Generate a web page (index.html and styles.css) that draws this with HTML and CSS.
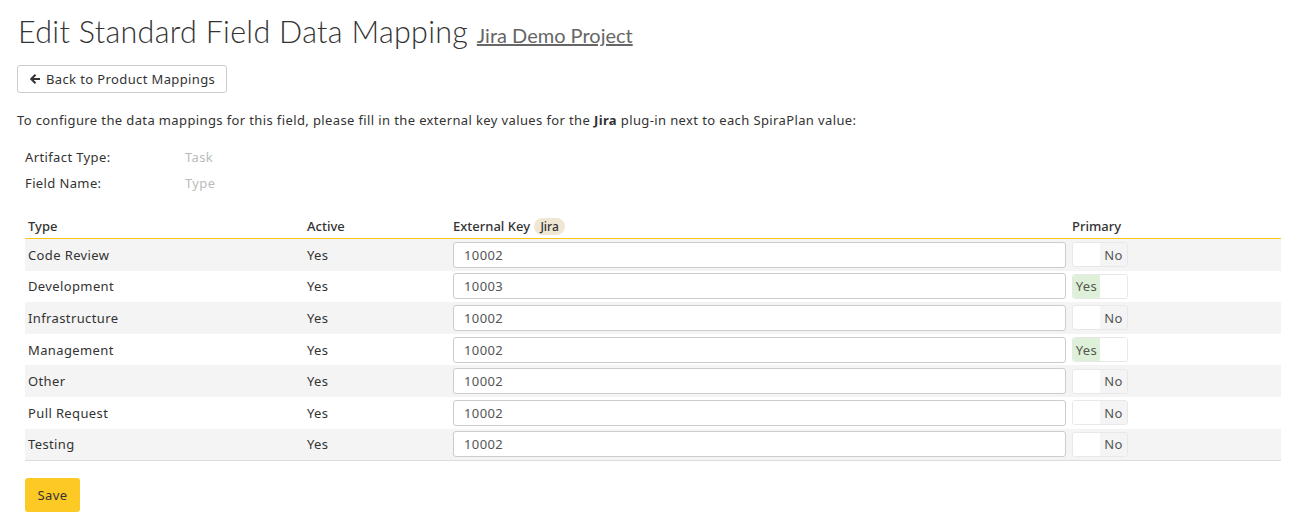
FILE: index.html
```html
<!DOCTYPE html>
<html>
<head>
<meta charset="utf-8">
<link rel="stylesheet" href="styles.css">
</head>
<body>
<div class="page">
  <h1 class="title">Edit Standard Field Data Mapping <a class="proj" href="#">Jira Demo Project</a></h1>
  <button class="btn-back"><svg class="arrow" viewBox="0 0 12 12" width="12" height="12"><path d="M11 6H2.5M6.5 1.8L2.2 6l4.3 4.2" fill="none" stroke="#333" stroke-width="2"/></svg>Back to Product Mappings</button>
  <p class="intro">To configure the data mappings for this field, please fill in the external key values for the <b>Jira</b> plug-in next to each SpiraPlan value:</p>
  <div class="meta">
    <div class="meta-row"><span class="meta-label">Artifact Type:</span><span class="meta-val">Task</span></div>
    <div class="meta-row"><span class="meta-label">Field Name:</span><span class="meta-val">Type</span></div>
  </div>
  <table class="grid">
    <colgroup><col class="w1"><col class="w2"><col class="w3"><col></colgroup>
    <thead>
      <tr><th>Type</th><th>Active</th><th>External Key <span class="badge">Jira</span></th><th>Primary</th></tr>
    </thead>
    <tbody>
      <tr><td>Code Review</td><td>Yes</td><td><input class="inp" value="10002"></td><td><span class="tog"><span class="t-l"></span><span class="t-r">No</span></span></td></tr>
      <tr><td>Development</td><td>Yes</td><td><input class="inp" value="10003"></td><td><span class="tog on"><span class="t-l">Yes</span><span class="t-r"></span></span></td></tr>
      <tr><td>Infrastructure</td><td>Yes</td><td><input class="inp" value="10002"></td><td><span class="tog"><span class="t-l"></span><span class="t-r">No</span></span></td></tr>
      <tr><td>Management</td><td>Yes</td><td><input class="inp" value="10002"></td><td><span class="tog on"><span class="t-l">Yes</span><span class="t-r"></span></span></td></tr>
      <tr><td>Other</td><td>Yes</td><td><input class="inp" value="10002"></td><td><span class="tog"><span class="t-l"></span><span class="t-r">No</span></span></td></tr>
      <tr><td>Pull Request</td><td>Yes</td><td><input class="inp" value="10002"></td><td><span class="tog"><span class="t-l"></span><span class="t-r">No</span></span></td></tr>
      <tr><td>Testing</td><td>Yes</td><td><input class="inp" value="10002"></td><td><span class="tog"><span class="t-l"></span><span class="t-r">No</span></span></td></tr>
    </tbody>
  </table>
  <button class="btn-save">Save</button>
</div>
</body>
</html>
```
FILE: styles.css
```css
html, body { margin: 0; padding: 0; background: #fff; }
body { font-family: "Noto Sans", sans-serif; font-size: 13px; letter-spacing: 0.38px; color: #333; }
.page { padding: 12px 20px 0 17px; }
.title { margin: 0 0 0 1px; font-family: "Lato", sans-serif; font-weight: 300; font-size: 30.5px; color: #333; line-height: 38px; letter-spacing: 0.3px; }
.proj { font-size: 20px; color: #666; font-weight: 400; text-decoration: underline; letter-spacing: 0; }
.btn-back { display: flex; align-items: center; gap: 5px; margin-top: 11px; height: 28px; padding: 0 11px 0 11px; background: #fff; border: 1px solid #ccc; border-radius: 3px; font: inherit; letter-spacing: inherit; color: #333; }
.intro { margin: 18px 0 0 0; line-height: 18px; }
.meta { margin: 15px 0 0 8px; }
.meta-row { display: flex; height: 26px; align-items: center; }
.meta-label { width: 160px; }
.meta-val { color: #bbb; }
.grid { margin: 18px 0 0 8px; width: 1256px; border-collapse: collapse; table-layout: fixed; }
.w1 { width: 279px; }
.w2 { width: 149px; }
.w3 { width: 613px; }
.grid th { text-align: left; font-weight: 500; letter-spacing: 0; padding: 0 3px; height: 24px; border-bottom: 1px solid #fcc419; vertical-align: middle; }
.badge { display: inline-block; margin-left: 1px; background: #efe7d4; border-radius: 9px; padding: 0 6px; font-size: 12px; line-height: 17px; letter-spacing: 0; }
.grid td { padding: 0 3px; height: 31.6px; vertical-align: middle; }
.grid th:nth-child(3), .grid td:nth-child(3) { padding: 0; }
.grid th:nth-child(4), .grid td:nth-child(4) { padding: 0 0 0 6px; }
.grid tbody tr:nth-child(odd) { background: #f4f4f4; }
.grid tbody tr:last-child td { border-bottom: 1px solid #ddd; }
.inp { display: block; box-sizing: border-box; width: 613px; height: 26px; border: 1px solid #ccc; border-radius: 3px; padding: 0 10px; font: inherit; letter-spacing: inherit; color: #555; background: #fff; }
.tog { display: inline-flex; height: 23px; border: 1px solid #e8e8e8; border-radius: 3px; overflow: hidden; vertical-align: middle; }
.t-l, .t-r { width: 27px; display: flex; align-items: center; justify-content: center; background: #fff; color: #555; }
.tog .t-r { background: #f4f4f4; }
.tog.on .t-l { background: #dff0d8; }
.tog.on .t-r { background: #fff; }
.btn-save { margin: 17px 0 0 8px; height: 34px; width: 55px; background: #fdc925; border: none; border-radius: 3px; font: inherit; letter-spacing: inherit; color: #333; }
```
